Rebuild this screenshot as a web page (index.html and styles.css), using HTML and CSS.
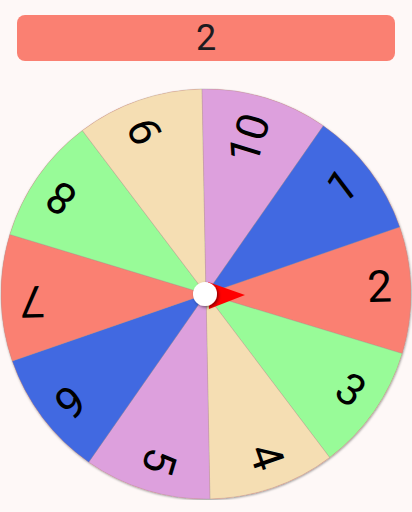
FILE: index.html
```html
<!DOCTYPE html>
<html>
<head>
<meta charset="utf-8">
<link rel="stylesheet" href="styles.css">
</head>
<body>
<div class="page">
  <div class="result">2</div>
  <svg class="wheel" width="412" height="412" viewBox="0 0 412 412">
    <defs>
      <filter id="rim" x="-5%" y="-5%" width="110%" height="110%">
        <feDropShadow dx="0.5" dy="1" stdDeviation="1.2" flood-color="#000" flood-opacity="0.4"/>
      </filter>
      <filter id="hub" x="-50%" y="-50%" width="200%" height="200%">
        <feDropShadow dx="1.5" dy="1.5" stdDeviation="1.6" flood-color="#000" flood-opacity="0.5"/>
      </filter>
    </defs>
    <g filter="url(#rim)">
      <circle cx="206" cy="206" r="205" fill="#fa8072"/>
    </g>
    <g transform="rotate(-1.1 206 206)">
      <g class="slices">
        <path class="salmon" d="M206 206 L400.97 142.65 A205 205 0 0 1 400.97 269.35 Z"/>
        <path class="green" d="M206 206 L400.97 269.35 A205 205 0 0 1 326.50 371.85 Z"/>
        <path class="wheat" d="M206 206 L326.50 371.85 A205 205 0 0 1 206 411 Z"/>
        <path class="plum" d="M206 206 L206 411 A205 205 0 0 1 85.50 371.85 Z"/>
        <path class="blue" d="M206 206 L85.50 371.85 A205 205 0 0 1 11.03 269.35 Z"/>
        <path class="salmon" d="M206 206 L11.03 269.35 A205 205 0 0 1 11.03 142.65 Z"/>
        <path class="green" d="M206 206 L11.03 142.65 A205 205 0 0 1 85.50 40.15 Z"/>
        <path class="wheat" d="M206 206 L85.50 40.15 A205 205 0 0 1 206 1 Z"/>
        <path class="plum" d="M206 206 L206 1 A205 205 0 0 1 326.50 40.15 Z"/>
        <path class="blue" d="M206 206 L326.50 40.15 A205 205 0 0 1 400.97 142.65 Z"/>
      </g>
      <g class="labels">
        <text x="392" y="217" text-anchor="end">2</text>
        <text x="392" y="217" text-anchor="end" transform="rotate(36 206 206)">3</text>
        <text x="392" y="217" text-anchor="end" transform="rotate(72 206 206)">4</text>
        <text x="392" y="217" text-anchor="end" transform="rotate(108 206 206)">5</text>
        <text x="392" y="217" text-anchor="end" transform="rotate(144 206 206)">6</text>
        <text x="392" y="217" text-anchor="end" transform="rotate(180 206 206)">7</text>
        <text x="392" y="217" text-anchor="end" transform="rotate(216 206 206)">8</text>
        <text x="392" y="217" text-anchor="end" transform="rotate(252 206 206)">9</text>
        <text x="392" y="217" text-anchor="end" transform="rotate(288 206 206)">10</text>
        <text x="392" y="217" text-anchor="end" transform="rotate(324 206 206)">1</text>
      </g>
    </g>
    <polygon class="pointer" points="208,194 245,207 209,221"/>
    <circle class="hub" cx="205" cy="206" r="12" filter="url(#hub)"/>
  </svg>
</div>
</body>
</html>
```

FILE: styles.css
```css
html, body {
  margin: 0;
  padding: 0;
  background: #fef8f7;
}

body {
  width: 412px;
  height: 512px;
  overflow: hidden;
  font-family: Roboto, "Noto Sans", sans-serif;
}

.page {
  display: flex;
  flex-direction: column;
  padding-top: 15px;
}

.result {
  margin: 0 17px;
  height: 46px;
  line-height: 46px;
  border-radius: 8px;
  background: #fa8072;
  color: #1d1b20;
  font-size: 36px;
  text-align: center;
}

.wheel {
  display: block;
  margin-top: 27px;
}

.slices path {
  stroke: rgba(150, 150, 150, 0.35);
  stroke-width: 0.8;
}

.salmon { fill: #fa8072; }
.green { fill: #98fb98; }
.wheat { fill: #f5deb3; }
.plum { fill: #dda0dd; }
.blue { fill: #4169e1; }

.labels text {
  font-family: Roboto, sans-serif;
  font-size: 44px;
  fill: #000;
}

.pointer {
  fill: #ff0000;
}

.hub {
  fill: #ffffff;
}
```
